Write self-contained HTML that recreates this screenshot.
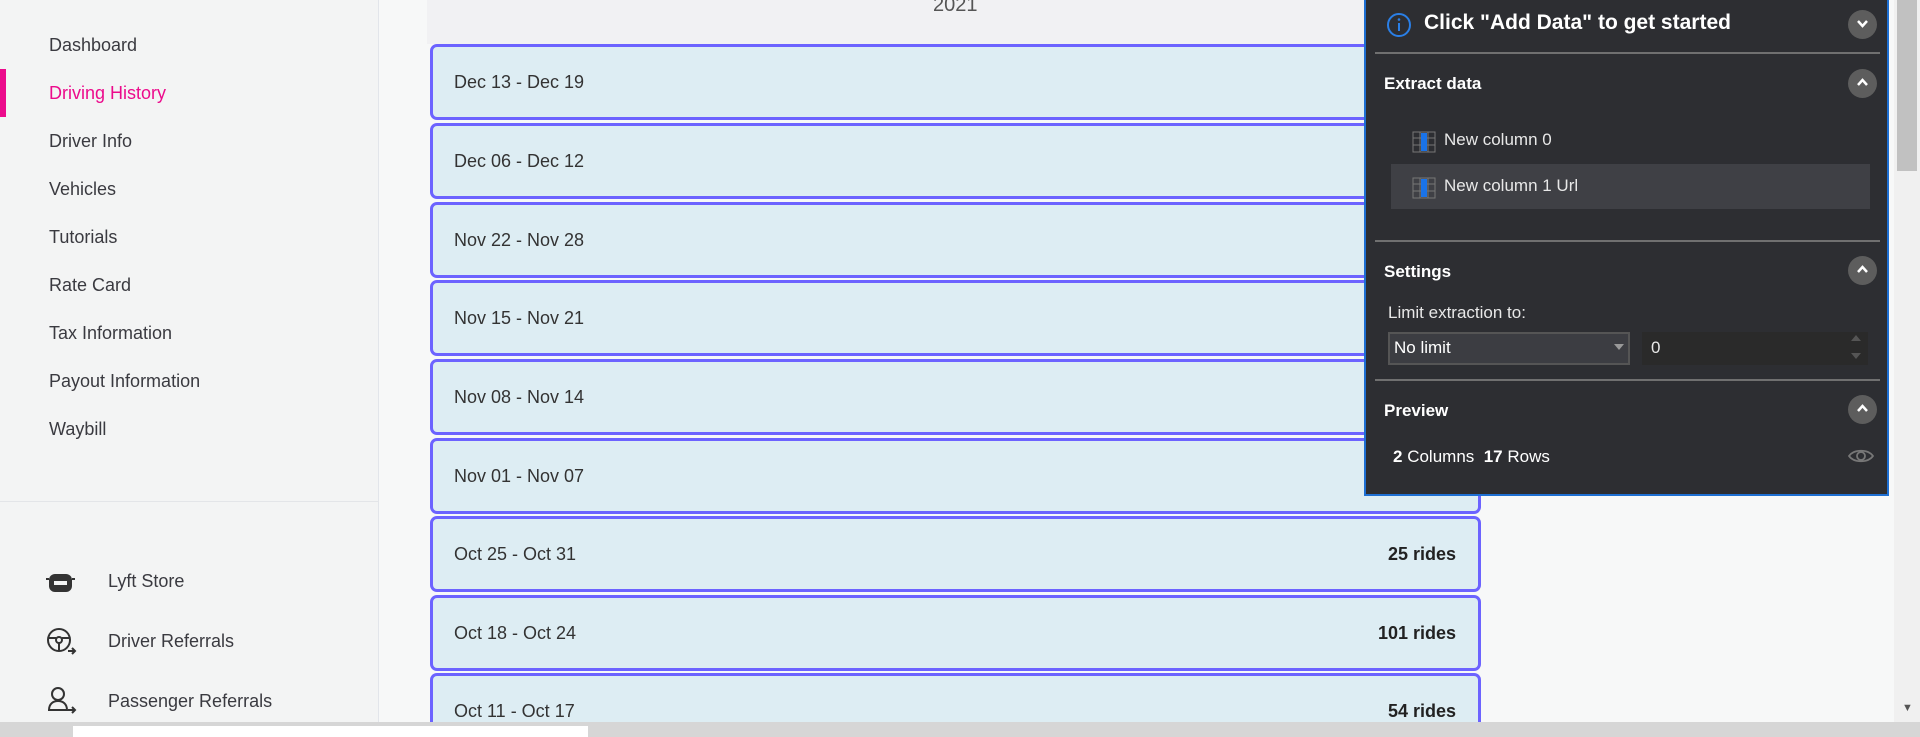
<!DOCTYPE html>
<html style="width:1920px;height:737px;overflow:hidden"><head><meta charset="utf-8"><style>
*{margin:0;padding:0;box-sizing:border-box}
body{width:1920px;height:737px;overflow:hidden;background:#f7f8f8;font-family:"Liberation Sans",sans-serif;position:relative}
.side{position:absolute;left:0;top:0;width:379px;height:722px;background:#f3f4f4;border-right:1px solid #e2e5ea}
.nav{position:absolute;left:49px;font-size:18px;color:#3a3a40}
.bar{position:absolute;left:0;top:69px;width:6px;height:48px;background:#ec0b8c}
.hr{position:absolute;left:0;top:501px;width:379px;height:1px;background:#e3e5e8}
.col{position:absolute;left:427px;top:0;width:1060px;height:44px;background:#f1f1f3}
.yr{position:absolute;left:933px;top:-6px;font-size:20px;color:#555}
.card{position:absolute;left:430px;width:1051px;height:76px;background:#ddedf3;border:3px solid #6c63ff;border-radius:7px;font-size:18px;color:#333}
.card span{position:absolute;left:21px;top:25px}
.card b{position:absolute;right:22px;top:25px;color:#222}
.panel{position:absolute;left:1364px;top:-4px;width:525px;height:500px;background:#2d2e32;border:2px solid #1e6fd2;color:#fff}
.ph{position:absolute;font-weight:bold;font-size:18px}
.btn{position:absolute;left:482px;width:29px;height:29px;border-radius:50%;background:#5d5d5d}
.btn svg{position:absolute;left:8px;top:9px}
.line{position:absolute;left:9px;width:505px;height:2px;background:#707070}
.txt{position:absolute;font-size:17px;color:#e8e8e8}
.scroll{position:absolute;left:1894px;top:0;width:26px;height:722px;background:#f0f0f0}
.task{position:absolute;left:0;top:722px;width:1920px;height:15px;background:#d6d6d6;z-index:5}
</style></head><body>
<div class="side">
<div class="bar"></div>
<div class="nav" style="top:35px">Dashboard</div>
<div class="nav" style="top:83px;color:#ec0b8c">Driving History</div>
<div class="nav" style="top:131px">Driver Info</div>
<div class="nav" style="top:179px">Vehicles</div>
<div class="nav" style="top:227px">Tutorials</div>
<div class="nav" style="top:275px">Rate Card</div>
<div class="nav" style="top:323px">Tax Information</div>
<div class="nav" style="top:371px">Payout Information</div>
<div class="nav" style="top:419px">Waybill</div>
<div class="hr"></div>
<svg style="position:absolute;left:46px;top:572px" width="30" height="22"><rect x="3" y="2" width="23" height="18" rx="6" fill="#333"/><rect x="8" y="9" width="13" height="4" fill="#f3f4f4"/><path d="M3 7H0M26 7h3" stroke="#333" stroke-width="2"/></svg>
<div class="nav" style="top:571px;left:108px">Lyft Store</div>
<svg style="position:absolute;left:46px;top:627px" width="32" height="30" fill="none" stroke="#333" stroke-width="2"><circle cx="13" cy="13" r="11"/><circle cx="13" cy="13" r="3"/><path d="M2 11h8M16 11h8M13 16v8"/><path d="M22 24h7M26 21l3 3-3 3"/></svg>
<div class="nav" style="top:631px;left:108px">Driver Referrals</div>
<svg style="position:absolute;left:46px;top:686px" width="32" height="30" fill="none" stroke="#333" stroke-width="2"><circle cx="12" cy="8" r="6"/><path d="M3 24c0-6 4-9 9-9s9 3 9 9z"/><path d="M22 24h7M26 21l3 3-3 3"/></svg>
<div class="nav" style="top:691px;left:108px">Passenger Referrals</div>
</div>
<div class="col"></div>
<div class="yr">2021</div>
<div class="card" style="top:44px"><span>Dec 13 - Dec 19</span></div>
<div class="card" style="top:123px"><span>Dec 06 - Dec 12</span></div>
<div class="card" style="top:202px"><span>Nov 22 - Nov 28</span></div>
<div class="card" style="top:280px"><span>Nov 15 - Nov 21</span></div>
<div class="card" style="top:359px"><span>Nov 08 - Nov 14</span></div>
<div class="card" style="top:438px"><span>Nov 01 - Nov 07</span></div>
<div class="card" style="top:516px"><span>Oct 25 - Oct 31</span><b>25 rides</b></div>
<div class="card" style="top:595px"><span>Oct 18 - Oct 24</span><b>101 rides</b></div>
<div class="card" style="top:673px;height:49px;border-bottom:none;border-radius:7px 7px 0 0"><span>Oct 11 - Oct 17</span><b>54 rides</b></div>
<div class="panel">
<svg style="position:absolute;left:20px;top:14px" width="26" height="26"><circle cx="13" cy="13" r="11" fill="none" stroke="#2a7fe6" stroke-width="2"/><path d="M13 11v8" stroke="#2a7fe6" stroke-width="2"/><circle cx="13" cy="7.5" r="1.3" fill="#2a7fe6"/></svg>
<div class="ph" style="left:58px;top:13px;font-size:21px">Click "Add Data" to get started</div>
<div class="btn" style="top:12px"><svg width="13" height="10"><path d="M2 2l4.5 5 4.5-5" stroke="#fff" stroke-width="2.5" fill="none"/></svg></div>
<div class="line" style="top:54px"></div>
<div class="ph" style="left:18px;top:76px;font-size:17px">Extract data</div>
<div class="btn" style="top:71px"><svg width="13" height="10"><path d="M2 7l4.5-5 4.5 5" stroke="#fff" stroke-width="2.5" fill="none"/></svg></div>
<svg style="position:absolute;left:46px;top:133px" width="24" height="22"><rect x="1" y="1" width="22" height="20" fill="none" stroke="#777"/><path d="M8 1v20M16 1v20M1 7h22M1 14h22" stroke="#777"/><rect x="9" y="2" width="6" height="18" fill="#1a73e8"/></svg>
<div class="txt" style="left:78px;top:132px">New column 0</div>
<div style="position:absolute;left:25px;top:166px;width:479px;height:45px;background:#3f4045"></div>
<svg style="position:absolute;left:46px;top:179px" width="24" height="22"><rect x="1" y="1" width="22" height="20" fill="none" stroke="#777"/><path d="M8 1v20M16 1v20M1 7h22M1 14h22" stroke="#777"/><rect x="9" y="2" width="6" height="18" fill="#1a73e8"/></svg>
<div class="txt" style="left:78px;top:178px">New column 1 Url</div>
<div class="line" style="top:242px"></div>
<div class="ph" style="left:18px;top:264px;font-size:17px">Settings</div>
<div class="btn" style="top:258px"><svg width="13" height="10"><path d="M2 7l4.5-5 4.5 5" stroke="#fff" stroke-width="2.5" fill="none"/></svg></div>
<div class="txt" style="left:22px;top:305px">Limit extraction to:</div>
<div style="position:absolute;left:22px;top:334px;width:242px;height:33px;background:#3c3d42;border:2px solid #555"></div>
<div class="txt" style="left:28px;top:340px;color:#fff">No limit</div>
<svg style="position:absolute;left:248px;top:346px" width="10" height="6"><path d="M0 0h10L5 6z" fill="#999"/></svg>
<div style="position:absolute;left:276px;top:334px;width:226px;height:33px;background:#2a2a2a"></div>
<div class="txt" style="left:285px;top:340px">0</div>
<svg style="position:absolute;left:485px;top:337px" width="10" height="24"><path d="M0 6h10L5 0zM0 18h10L5 24z" fill="#555"/></svg>
<div class="line" style="top:381px"></div>
<div class="ph" style="left:18px;top:403px;font-size:17px">Preview</div>
<div class="btn" style="top:397px"><svg width="13" height="10"><path d="M2 7l4.5-5 4.5 5" stroke="#fff" stroke-width="2.5" fill="none"/></svg></div>
<div class="txt" style="left:27px;top:449px;color:#fff"><b>2</b> Columns &nbsp;<b>17</b> Rows</div>
<svg style="position:absolute;left:482px;top:449px" width="26" height="18" fill="none" stroke="#777" stroke-width="1.8"><path d="M1 9C6 2 20 2 25 9 20 16 6 16 1 9z"/><circle cx="13" cy="9" r="4"/></svg>
</div>
<div class="scroll"><div style="position:absolute;left:3px;top:0;width:20px;height:171px;background:#c1c1c1"></div><div style="position:absolute;left:8px;top:702px;font-size:11px;color:#555">▼</div></div>
<div class="task"><div style="position:absolute;left:73px;top:4px;width:515px;height:11px;background:#fff"></div></div>
</body></html>
